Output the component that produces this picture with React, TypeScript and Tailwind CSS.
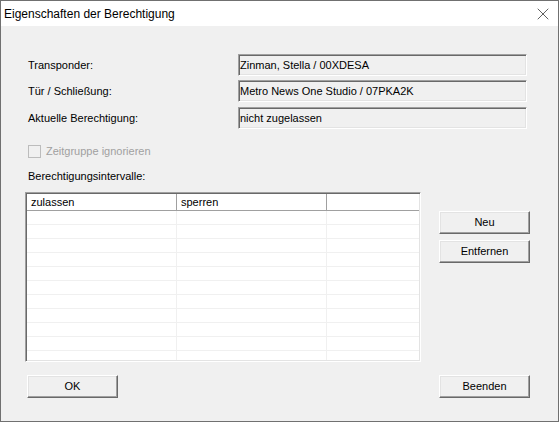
import { X } from 'lucide-react';

const sunken =
  'border border-t-[#a0a0a0] border-l-[#a0a0a0] border-r-white border-b-white shadow-[inset_1px_1px_0_#696969,inset_-1px_-1px_0_#e3e3e3]';
const raised =
  'border border-t-white border-l-white border-r-[#696969] border-b-[#696969] shadow-[inset_-1px_-1px_0_#a0a0a0,inset_1px_1px_0_#e3e3e3] bg-[#f0f0f0]';

function Field({ label, value, mt }: { label: string; value: string; mt: string }) {
  return (
    <div className={`flex items-center h-[22px] pl-[3px] ${mt}`}>
      <div className="w-[210px]">{label}</div>
      <div className={`w-[289px] h-[22px] flex items-center pl-[1px] ${sunken}`}>{value}</div>
    </div>
  );
}

function Btn({ label }: { label: string }) {
  return <div className={`w-[91px] h-[23px] flex items-center justify-center ${raised}`}>{label}</div>;
}

export default function App() {
  const rows = Array.from({ length: 11 });
  return (
    <div className="w-[559px] h-[422px] border border-[#707070] bg-white flex flex-col font-['Liberation_Sans',Arial,sans-serif] text-[11px] text-black">
      {/* title bar */}
      <div className="h-[25px] flex items-center justify-between pl-[3px] pr-[5px] bg-white">
        <span className="text-[12px]">Eigenschaften der Berechtigung</span>
        <X size={20} strokeWidth={0.75} />
      </div>

      <div className="flex-1 bg-[#f0f0f0] pl-[24px]">
        <Field label="Transponder:" value="Zinman, Stella / 00XDESA" mt="mt-[28px]" />
        <Field label="Tür / Schließung:" value="Metro News One Studio / 07PKA2K" mt="mt-[4px]" />
        <Field label="Aktuelle Berechtigung:" value="nicht zugelassen" mt="mt-[5px]" />

        <div className="flex items-center gap-[5px] pl-[3px] mt-[16px] h-[13px] text-[#a0a0a0]">
          <div className="w-[13px] h-[13px] border border-[#bcbcbc] bg-[#f0f0f0]" />
          <span>Zeitgruppe ignorieren</span>
        </div>

        <div className="pl-[3px] mt-[12px] leading-[13px]">Berechtigungsintervalle:</div>

        <div className="flex mt-[9px]">
          {/* list view */}
          <div className={`w-[396px] h-[170px] p-[1px] bg-white flex flex-col overflow-hidden ${sunken}`}>
            <div className="flex h-[17px] shrink-0 border-b border-[#a0a0a0] bg-[#f0f0f0]">
              <div className="w-[150px] flex items-center pl-[4px] border-r border-[#a0a0a0] bg-white">zulassen</div>
              <div className="w-[150px] flex items-center pl-[4px] border-r border-[#a0a0a0] bg-white shadow-[inset_1px_0_0_white]">sperren</div>
              <div className="flex-1 bg-white" />
            </div>
            <div className="flex-1 overflow-hidden">
              {rows.map((_, i) => (
                <div key={i} className="flex h-[14px] border-b border-[#f0f0f0]">
                  <div className="w-[150px] border-r border-[#f0f0f0]" />
                  <div className="w-[150px] border-r border-[#f0f0f0]" />
                  <div className="flex-1" />
                </div>
              ))}
            </div>
          </div>

          <div className="ml-[18px] pt-[19px] flex flex-col gap-[6px]">
            <Btn label="Neu" />
            <Btn label="Entfernen" />
          </div>
        </div>

        <div className="flex justify-between mt-[13px] pl-[2px] pr-[28px]">
          <Btn label="OK" />
          <Btn label="Beenden" />
        </div>
      </div>
    </div>
  );
}
